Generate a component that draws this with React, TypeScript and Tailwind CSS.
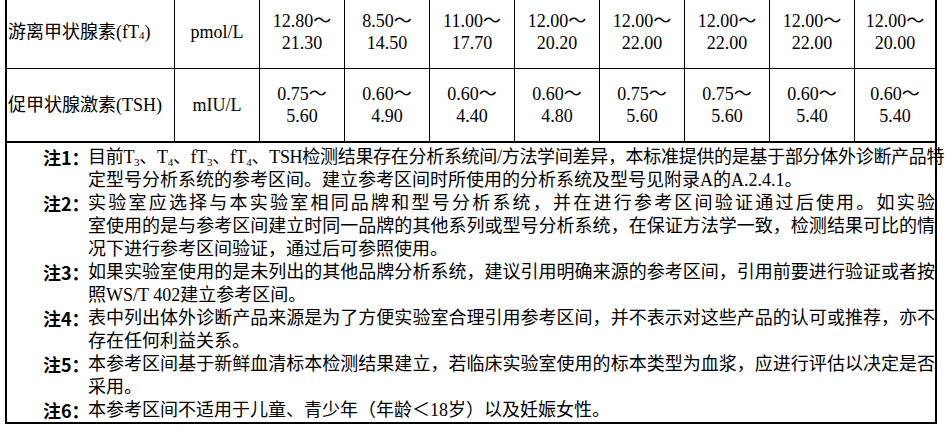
import type { ReactNode } from 'react'

interface RangeRow {
  name: ReactNode
  unit: string
  values: [string, string][]
}

const rows: RangeRow[] = [
  {
    name: (
      <>
        游离甲状腺素(fT<sub className="text-[11px]">4</sub>)
      </>
    ),
    unit: 'pmol/L',
    values: [
      ['12.80～', '21.30'],
      ['8.50～', '14.50'],
      ['11.00～', '17.70'],
      ['12.00～', '20.20'],
      ['12.00～', '22.00'],
      ['12.00～', '22.00'],
      ['12.00～', '22.00'],
      ['12.00～', '20.00'],
    ],
  },
  {
    name: '促甲状腺激素(TSH)',
    unit: 'mIU/L',
    values: [
      ['0.75～', '5.60'],
      ['0.60～', '4.90'],
      ['0.60～', '4.40'],
      ['0.60～', '4.80'],
      ['0.75～', '5.60'],
      ['0.75～', '5.60'],
      ['0.60～', '5.40'],
      ['0.60～', '5.40'],
    ],
  },
]

const s = (n: string) => <sub className="text-[11px]">{n}</sub>

// each note is split into its printed lines; all but the last are justified
const notes: { label: string; lines: ReactNode[] }[] = [
  {
    label: '注1：',
    lines: [
      <span className="tracking-[-0.3px]">
        目前T{s('3')}、T{s('4')}、fT{s('3')}、fT{s('4')}、TSH检测结果存在分析系统间/方法学间差异，本标准提供的是基于部分体外诊断产品特
      </span>,
      '定型号分析系统的参考区间。建立参考区间时所使用的分析系统及型号见附录A的A.2.4.1。',
    ],
  },
  {
    label: '注2：',
    lines: [
      '实验室应选择与本实验室相同品牌和型号分析系统，并在进行参考区间验证通过后使用。如实验',
      '室使用的是与参考区间建立时同一品牌的其他系列或型号分析系统，在保证方法学一致，检测结果可比的情',
      '况下进行参考区间验证，通过后可参照使用。',
    ],
  },
  {
    label: '注3：',
    lines: [
      '如果实验室使用的是未列出的其他品牌分析系统，建议引用明确来源的参考区间，引用前要进行验证或者按',
      '照WS/T 402建立参考区间。',
    ],
  },
  {
    label: '注4：',
    lines: [
      '表中列出体外诊断产品来源是为了方便实验室合理引用参考区间，并不表示对这些产品的认可或推荐，亦不',
      '存在任何利益关系。',
    ],
  },
  {
    label: '注5：',
    lines: [
      '本参考区间基于新鲜血清标本检测结果建立，若临床实验室使用的标本类型为血浆，应进行评估以决定是否',
      '采用。',
    ],
  },
  {
    label: '注6：',
    lines: ['本参考区间不适用于儿童、青少年（年龄＜18岁）以及妊娠女性。'],
  },
]

export default function App() {
  return (
    <div className="w-[945px] h-[430px] overflow-hidden bg-white text-black font-['Liberation_Serif','Noto_Sans_CJK_SC',serif]">
      <div className="ml-[5px] -mt-[6px] w-[932px] border-2 border-black">
        {rows.map((row, ri) => (
          <div
            key={ri}
            className={`grid grid-cols-[168px_repeat(8,85px)_80px] text-[18px] leading-[22px] ${ri === 0 ? 'h-[73px] border-b border-black' : 'h-[72px]'}`}
          >
            <div className="flex items-center pl-[1px] border-r border-black whitespace-nowrap">{row.name}</div>
            <div className="flex items-center justify-center border-r border-black">{row.unit}</div>
            {row.values.map(([a, b], vi) => (
              <div
                key={vi}
                className={`flex flex-col items-center justify-center text-center ${vi < 7 ? 'border-r border-black' : ''}`}
              >
                <span>{a}</span>
                <span>{b}</span>
              </div>
            ))}
          </div>
        ))}

        <div className="border-t-2 border-black pt-[3px] pl-[36px] text-[18px] leading-[23px]">
          {notes.map((note) => (
            <div key={note.label} className="flex">
              <div className="w-[45px] shrink-0 whitespace-nowrap font-bold font-['Noto_Sans_CJK_SC',sans-serif]">
                {note.label}
              </div>
              <div className="w-[847px]">
                {note.lines.map((line, li) => (
                  <div
                    key={li}
                    className={`whitespace-nowrap ${li < note.lines.length - 1 ? 'text-justify [text-align-last:justify]' : 'text-left'}`}
                  >
                    {line}
                  </div>
                ))}
              </div>
            </div>
          ))}
        </div>
      </div>
    </div>
  )
}
